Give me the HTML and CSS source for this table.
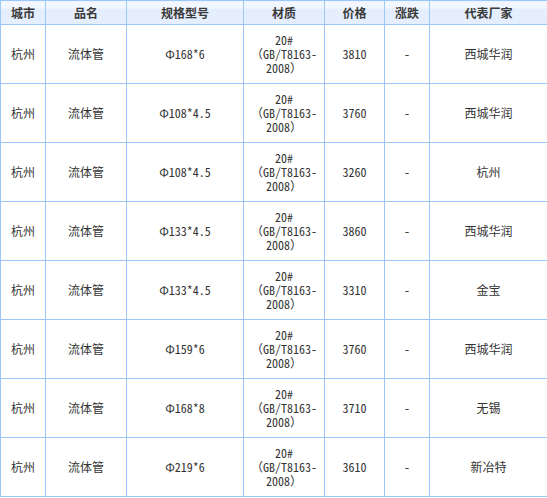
FILE: index.html
```html
<!DOCTYPE html>
<html lang="zh-CN">
<head>
<meta charset="utf-8">
<title>流体管价格</title>
<link rel="stylesheet" href="styles.css">
</head>
<body>
<table class="price-table">
  <colgroup>
    <col class="c1"><col class="c2"><col class="c3"><col class="c4"><col class="c5"><col class="c6"><col class="c7">
  </colgroup>
  <thead>
    <tr><th>城市</th><th>品名</th><th>规格型号</th><th>材质</th><th>价格</th><th>涨跌</th><th>代表厂家</th></tr>
  </thead>
  <tbody>
    <tr><td>杭州</td><td>流体管</td><td>Φ168*6</td><td class="mat">20#（GB/T8163-2008）</td><td>3810</td><td>-</td><td>西城华润</td></tr>
    <tr><td>杭州</td><td>流体管</td><td>Φ108*4.5</td><td class="mat">20#（GB/T8163-2008）</td><td>3760</td><td>-</td><td>西城华润</td></tr>
    <tr><td>杭州</td><td>流体管</td><td>Φ108*4.5</td><td class="mat">20#（GB/T8163-2008）</td><td>3260</td><td>-</td><td>杭州</td></tr>
    <tr><td>杭州</td><td>流体管</td><td>Φ133*4.5</td><td class="mat">20#（GB/T8163-2008）</td><td>3860</td><td>-</td><td>西城华润</td></tr>
    <tr><td>杭州</td><td>流体管</td><td>Φ133*4.5</td><td class="mat">20#（GB/T8163-2008）</td><td>3310</td><td>-</td><td>金宝</td></tr>
    <tr><td>杭州</td><td>流体管</td><td>Φ159*6</td><td class="mat">20#（GB/T8163-2008）</td><td>3760</td><td>-</td><td>西城华润</td></tr>
    <tr><td>杭州</td><td>流体管</td><td>Φ168*8</td><td class="mat">20#（GB/T8163-2008）</td><td>3710</td><td>-</td><td>无锡</td></tr>
    <tr><td>杭州</td><td>流体管</td><td>Φ219*6</td><td class="mat">20#（GB/T8163-2008）</td><td>3610</td><td>-</td><td>新冶特</td></tr>
  </tbody>
</table>
</body>
</html>
```

FILE: styles.css
```css
html, body {
  margin: 0;
  padding: 0;
  background: #ffffff;
}

.price-table {
  border-collapse: collapse;
  table-layout: fixed;
  width: 547px;
  font-family: "Noto Sans Mono CJK SC", "Noto Sans CJK SC", sans-serif;
  font-size: 12px;
  color: #333333;
}

.c1 { width: 45px; }
.c2 { width: 81px; }
.c3 { width: 117px; }
.c4 { width: 81px; }
.c5 { width: 60px; }
.c6 { width: 45px; }
.c7 { width: 118px; }

.price-table th,
.price-table td {
  border: 1px solid #9cc8f7;
  padding: 0;
  text-align: center;
  vertical-align: middle;
}

.price-table th {
  height: 23px;
  font-weight: bold;
  color: #3a3a3a;
  background: linear-gradient(#f2f7ff 0, #f2f7ff 7px, #e4eefc 7px, #e4eefc 100%);
  line-height: 14px;
}

.price-table td {
  height: 58px;
  line-height: 14px;
}

.price-table td.mat {
  padding: 0 6px;
  word-break: normal;
}
```
